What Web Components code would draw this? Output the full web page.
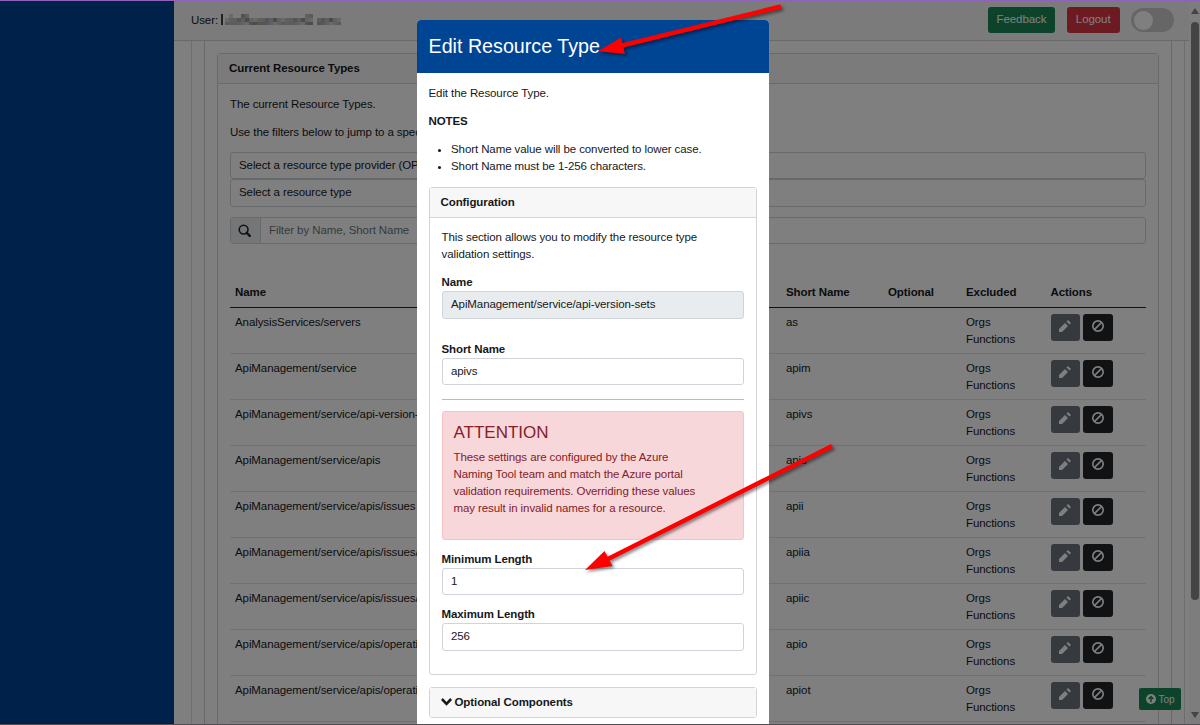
<!DOCTYPE html>
<html lang="en">
<head>
	<meta charset="utf-8">
	<title>Resource Types</title>
	<style>
		html, body {
			margin: 0;
			height: 100%;
			overflow: hidden;
		}

		body {
			font: 11.5px/17px "Liberation Sans", Arial, sans-serif;
			letter-spacing: -.09px;
			color: #16181b;
			background-color: #fff;
		}
	</style>
</head>
<body>
	<naming-app></naming-app>

	<template id="namingApp">
		<style>
			:host {
				display: flex;
				position: relative;
				width: 1200px;
				height: 725px;
				overflow: hidden;
			}

			.sidebar {
				flex: 0 0 174px;
				background-color: #004292;
			}

			.page {
				flex: 1;
				min-width: 0;
				display: flex;
				flex-direction: column;
			}

			.content {
				flex: 1;
				min-height: 0;
				overflow: hidden;
				padding: 0 4px 0 17px;
			}

			.outer, .middle {
				height: 100%;
				box-sizing: border-box;
				border: solid #dcdcdc;
				border-width: 0 1px;
				padding: 0 12px;
			}

			.middle {
				border-color: #cfcfcf;
				padding: 12px 12px 0;
			}

			.intro {
				margin: 0 0 11px;
			}

			.filters {
				display: flex;
				flex-direction: column;
				margin-bottom: 38px;
			}

			.select, .search {
				box-sizing: border-box;
				height: 27.5px;
				border: 1px solid #ced4da;
				border-radius: 3px;
				padding: 4px 8px;
			}

			.search {
				display: flex;
				margin-top: 10px;
				padding: 0;
				color: #6c757d;
			}

			.search__icon {
				width: 29px;
				display: grid;
				place-items: center;
				background-color: #e9ecef;
				border-right: 1px solid #ced4da;
			}

			.search__icon svg {
				margin-right: 2px;
			}

			.search__text {
				padding: 4.5px 8px;
			}

			.backdrop {
				position: absolute;
				inset: 0;
				background-color: rgba(0, 0, 0, .5);
			}

			.top {
				position: absolute;
				left: 1139px;
				top: 688px;
				width: 42px;
				height: 22px;
				display: flex;
				align-items: center;
				justify-content: center;
				gap: 3px;
				border-radius: 2px;
				background-color: #198754;
				color: #fff;
				font-size: 10px;
				letter-spacing: -.1px;
			}

			edit-modal {
				position: absolute;
				left: 417px;
				top: 20px;
			}

			.arrows {
				position: absolute;
				left: 0;
				top: 0;
				filter: drop-shadow(2px 2px 1.5px rgba(0, 0, 0, .45));
			}

			.edge {
				position: absolute;
				left: 0;
				right: 0;
				top: 0;
				height: 1.4px;
				background-color: #8d62b8;
			}

			.edge--bottom {
				top: 724px;
				height: 1px;
				background-color: #504e52;
			}
		</style>
		<div class="sidebar"></div>
		<div class="page">
			<app-header></app-header>
			<div class="content">
				<div class="outer">
					<div class="middle">
						<card-box heading="Current Resource Types">
							<p class="intro">The current Resource Types.</p>
							<p class="intro">Use the filters below to jump to a spec</p>
							<div class="filters">
								<div class="select">Select a resource type provider (OPTIONAL)</div>
								<div class="select">Select a resource type</div>
								<div class="search">
									<span class="search__icon">
										<svg width="13" height="13" viewBox="0 0 13 13" fill="none" stroke="#212529"><circle cx="5.6" cy="5.6" r="4.4" stroke-width="1.6"/><path d="M8.8 8.8l3 3" stroke-width="2.4" stroke-linecap="round"/></svg>
									</span>
									<span class="search__text">Filter by Name, Short Name</span>
								</div>
							</div>
							<resource-table></resource-table>
						</card-box>
					</div>
				</div>
			</div>
		</div>
		<scroll-bar></scroll-bar>
		<div class="top">
			<svg width="10" height="10" viewBox="0 0 10 10"><circle cx="5" cy="5" r="5" fill="#fff"/><path d="M5 8.2V3M2.6 5L5 2.5 7.4 5" fill="none" stroke="#198754" stroke-width="1.5"/></svg>
			<span>Top</span>
		</div>
		<div class="backdrop"></div>
		<edit-modal></edit-modal>
		<div class="edge"></div>
		<div class="edge edge--bottom"></div>
		<svg class="arrows" width="1200" height="725" fill="#f00" stroke="#f00">
			<path d="M781 6.5L620 46" stroke-width="4.4"/>
			<path d="M598 51.2L621 37.5 625 54z" stroke="none"/>
			<path d="M832 446L606 560" stroke-width="4.4"/>
			<path d="M585 570L604.5 551 612.5 566z" stroke="none"/>
		</svg>
	</template>

	<template id="appHeader">
		<style>
			:host {
				flex: 0 0 41px;
				box-sizing: border-box;
				display: flex;
				align-items: center;
				padding: 0 15px 0 17px;
				background-color: #f7f7f7;
				border-bottom: 1px solid #d2d2d2;
			}

			.user {
				flex: 1;
				display: flex;
				align-items: center;
				gap: 3px;
			}

			.button {
				box-sizing: border-box;
				height: 26.5px;
				padding: 4.5px 9px;
				margin-right: 11.5px;
				border-radius: 3px;
				background-color: #198754;
				color: #fff;
			}

			.button--danger {
				background-color: #dc3545;
			}

			.switch {
				box-sizing: border-box;
				width: 43px;
				height: 24px;
				padding: 2.5px;
				border-radius: 12px;
				background-color: #ccc;
			}

			.switch::before {
				content: "";
				display: block;
				width: 19px;
				height: 19px;
				border-radius: 50%;
				background-color: #fff;
			}
		</style>
		<div class="user">User: <svg class="mask" width="120" height="14" shape-rendering="crispEdges"></svg></div>
		<div class="button">Feedback</div>
		<div class="button button--danger">Logout</div>
		<div class="switch"></div>
	</template>

	<template id="cardBox">
		<style>
			:host {
				display: block;
				box-sizing: border-box;
				border: 1px solid #d4d4d4;
				border-radius: 3px;
			}

			.head {
				display: flex;
				align-items: center;
				gap: 3px;
				box-sizing: border-box;
				height: 29px;
				padding: 0 11px;
				background-color: #f7f7f7;
				font-weight: bold;
			}

			.body {
				border-top: 1.5px solid #d4d4d4;
				padding: 11.5px 12px 12px;
			}

			:host([collapsed]) .body {
				display: none;
			}
		</style>
		<div class="head"><slot name="icon"></slot><span class="title"></span></div>
		<div class="body"><slot></slot></div>
	</template>

	<template id="resourceTable">
		<style>
			:host {
				display: block;
			}

			.row {
				display: grid;
				grid-template-columns: 551px 102px 78px 84.5px 1fr;
				box-sizing: border-box;
				height: 46.06px;
				padding: 6px 0 0 5px;
				border-bottom: 1px solid #dee2e6;
			}

			.row--head {
				height: 25.5px;
				padding-top: 2px;
				font-weight: bold;
				border-bottom: 1px solid #212529;
			}

			.actions {
				display: flex;
				gap: 3px;
			}

			.action {
				width: 29.7px;
				height: 27.5px;
				display: grid;
				place-items: center;
				box-sizing: border-box;
				padding-bottom: 3px;
				border-radius: 3px;
				background-color: #6c757d;
			}

			.action--dark {
				background-color: #212529;
			}
		</style>
		<div class="row row--head">
			<span>Name</span><span>Short Name</span><span>Optional</span><span>Excluded</span><span>Actions</span>
		</div>
	</template>

	<template id="scrollBar">
		<style>
			:host {
				flex: 0 0 11px;
				display: flex;
				flex-direction: column;
				align-items: center;
				box-sizing: border-box;
				padding: 8px 0 7px 1px;
				background-color: #fafafa;
			}

			.thumb {
				flex: 0 0 578px;
				width: 8px;
				margin: 8px 0 auto;
				border-radius: 4px;
				background-color: #888;
			}
		</style>
		<svg width="8" height="6"><path d="M4 0l4 6H0z" fill="#888"/></svg>
		<div class="thumb"></div>
		<svg width="8" height="6"><path d="M4 6L0 0h8z" fill="#888"/></svg>
	</template>

	<template id="formField">
		<style>
			:host {
				display: block;
			}

			.label {
				display: block;
				font-weight: bold;
			}

			.input {
				box-sizing: border-box;
				height: 27.5px;
				padding: 4px 8.5px;
				border: 1px solid #ced4da;
				border-radius: 3px;
				background-color: #fff;
			}

			:host([disabled]) .input {
				background-color: #e9ecef;
			}
		</style>
		<span class="label"></span>
		<div class="input"><slot></slot></div>
	</template>

	<template id="editModal">
		<style>
			:host {
				display: block;
				width: 352px;
				height: 705px;
				overflow: hidden;
				border-radius: 4px 4px 0 0;
				background-color: #fff;
			}

			.title {
				box-sizing: border-box;
				height: 53px;
				padding: 14px 11.5px;
				background-color: #004494;
				color: #fff;
				font-size: 19.7px;
				line-height: 24px;
				letter-spacing: 0;
			}

			.body {
				padding: 11.5px 12px 0 11.5px;
			}

			p {
				margin: 0 0 11px;
			}

			ul {
				margin: 0 0 11px;
				padding-left: 22.5px;
				line-height: 17.5px;
			}

			form-field {
				margin-bottom: 22px;
			}

			form-field.last {
				margin-bottom: 11px;
			}

			hr {
				margin: -8.5px 0 11px;
				border: 0;
				border-top: 1px solid #bbb;
			}

			.alert {
				box-sizing: border-box;
				height: 129.5px;
				margin-bottom: 10.75px;
				padding: 11px 40px 0 11px;
				border: 1px solid #f5c2c7;
				border-radius: 3px;
				background-color: #f8d7da;
				color: #842029;
			}

			.alert__title {
				margin-bottom: 6px;
				font-size: 17px;
				line-height: 20px;
				letter-spacing: 0;
			}

			card-box {
				margin-bottom: 12px;
			}
		</style>
		<div class="title">Edit Resource Type</div>
		<div class="body">
			<p>Edit the Resource Type.</p>
			<p><b>NOTES</b></p>
			<ul>
				<li>Short Name value will be converted to lower case.</li>
				<li>Short Name must be 1-256 characters.</li>
			</ul>
			<card-box heading="Configuration">
				<p>This section allows you to modify the resource type validation settings.</p>
				<form-field label="Name" disabled>ApiManagement/service/api-version-sets</form-field>
				<form-field label="Short Name">apivs</form-field>
				<hr>
				<div class="alert">
					<div class="alert__title">ATTENTION</div>
					These settings are configured by the Azure Naming Tool team and match the Azure portal validation requirements. Overriding these values may result in invalid names for a resource.
				</div>
				<form-field class="last" label="Minimum Length">1</form-field>
				<form-field class="last" label="Maximum Length">256</form-field>
			</card-box>
			<card-box heading="Optional Components" collapsed>
				<svg slot="icon" width="11" height="8" viewBox="0 0 8 5.5" preserveAspectRatio="none"><path d="M1.3 0L0 1.4l4 4 4-4L6.7 0 4 2.7z" fill="#16181b"/></svg>
			</card-box>
		</div>
	</template>

	<script>
		(function() {

			'use strict';

			const resources = [
				['AnalysisServices/servers', 'as'],
				['ApiManagement/service', 'apim'],
				['ApiManagement/service/api-version-sets', 'apivs'],
				['ApiManagement/service/apis', 'apis'],
				['ApiManagement/service/apis/issues', 'apii'],
				['ApiManagement/service/apis/issues/a', 'apiia'],
				['ApiManagement/service/apis/issues/c', 'apiic'],
				['ApiManagement/service/apis/operations', 'apio'],
				['ApiManagement/service/apis/operations/t', 'apiot']
			];

			const pencil = '<svg width="12" height="12" viewBox="0 0 8 8" fill="#fff"><path d="M6 0l-1 1 2 2 1-1-2-2zm-2 2l-4 4v2h2l4-4-2-2z"/></svg>';
			const ban = '<svg width="12" height="12" viewBox="0 0 8 8" fill="none" stroke="#fff" stroke-width="1.1"><circle cx="4" cy="4" r="3.45"/><path d="M6.4 1.6L1.6 6.4"/></svg>';

			class TemplateElement extends HTMLElement {
				constructor(id) {
					super();
					const t = document.querySelector(id);
					this.attachShadow({mode: 'open'}).appendChild(t.content.cloneNode(true));
				}
			}

			class AppHeader extends TemplateElement {
				constructor() {
					super('#appHeader');
					// Mosaic over the address of the signed in user
					const shades = ['#666', '#c4c4c4', '#ccc4bc', '#a8a8b0', '#b4b4b4', '#d8d0c8', '#b0b0b0', '#bcbac6',
						'#a4a4a4', '#c8beb4', '#b8b8b8', '#989898', '#d4d4d4', '#bcbcc4', '#b0a8a0'];
					let blocks = '<rect width="2" height="11" y="1" fill="#444"/>';
					for (let i = 1; i < 30; i++) {
						if (i === 23) continue;
						const tall = [2, 5, 6, 21, 22].includes(i);
						if (tall) blocks += `<rect x="${i * 4}" y="1" width="4" height="4" fill="${shades[(i + 3) % 15]}"/>`;
						blocks += `<rect x="${i * 4}" y="5" width="4" height="4" fill="${shades[(i * 4) % 14 + 1]}"/>`;
						blocks += `<rect x="${i * 4}" y="9" width="4" height="3" fill="${shades[(i * 3) % 14 + 1]}"/>`;
					}
					this.shadowRoot.querySelector('.mask').innerHTML = blocks;
				}
			}

			class CardBox extends TemplateElement {
				constructor() {
					super('#cardBox');
				}

				connectedCallback() {
					this.shadowRoot.querySelector('.title').textContent = this.getAttribute('heading');
				}
			}

			class ResourceTable extends TemplateElement {
				constructor() {
					super('#resourceTable');
					resources.forEach(([name, short]) => {
						const row = document.createElement('div');
						row.className = 'row';
						row.innerHTML = `<span>${name}</span><span>${short}</span><span></span>
							<span>Orgs<br>Functions</span>
							<div class="actions"><div class="action">${pencil}</div><div class="action action--dark">${ban}</div></div>`;
						this.shadowRoot.appendChild(row);
					});
				}
			}

			class ScrollBar extends TemplateElement {
				constructor() {
					super('#scrollBar');
				}
			}

			class FormField extends TemplateElement {
				constructor() {
					super('#formField');
				}

				connectedCallback() {
					this.shadowRoot.querySelector('.label').textContent = this.getAttribute('label');
				}
			}

			class EditModal extends TemplateElement {
				constructor() {
					super('#editModal');
				}
			}

			class NamingApp extends TemplateElement {
				constructor() {
					super('#namingApp');
				}
			}

			customElements.define('app-header', AppHeader);
			customElements.define('card-box', CardBox);
			customElements.define('resource-table', ResourceTable);
			customElements.define('scroll-bar', ScrollBar);
			customElements.define('form-field', FormField);
			customElements.define('edit-modal', EditModal);
			customElements.define('naming-app', NamingApp);

		})();
	</script>
</body>
</html>
